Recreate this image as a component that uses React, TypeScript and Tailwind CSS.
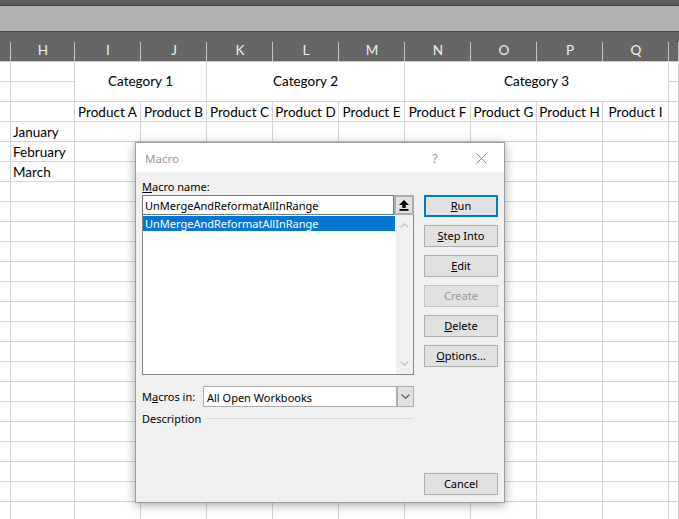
import React from 'react';

const GRID = 'grid grid-cols-[11px_64px_repeat(9,66px)_1fr]';
const cell = 'border-r border-b border-[#d4d4d4] bg-white';
const letters = ['', 'H', 'I', 'J', 'K', 'L', 'M', 'N', 'O', 'P', 'Q', ''];
const products = ['A', 'B', 'C', 'D', 'E', 'F', 'G', 'H', 'I'];
const months = ['January', 'February', 'March'];

function Sheet() {
  const rows: React.ReactNode[] = [];
  rows.push(<div key="r1a" className={cell} />);
  rows.push(<div key="r1b" className={cell} />);
  rows.push(
    <div key="c1" className={`${cell} col-span-2 row-span-2 flex items-center justify-center`}>Category 1</div>
  );
  rows.push(
    <div key="c2" className={`${cell} col-span-3 row-span-2 flex items-center justify-center`}>Category 2</div>
  );
  rows.push(
    <div key="c3" className={`${cell} col-span-4 row-span-2 flex items-center justify-center`}>Category 3</div>
  );
  rows.push(<div key="r1z" className={cell} />);
  rows.push(<div key="r2a" className={cell} />);
  rows.push(<div key="r2b" className={cell} />);
  rows.push(<div key="r2z" className={cell} />);
  rows.push(<div key="r3a" className={cell} />);
  rows.push(<div key="r3b" className={cell} />);
  products.forEach((p) =>
    rows.push(
      <div key={'p' + p} className={`${cell} flex items-center justify-center pt-[2px] whitespace-nowrap overflow-hidden`}>
        Product {p}
      </div>
    )
  );
  rows.push(<div key="r3z" className={cell} />);
  months.forEach((m) => {
    rows.push(<div key={m + 'a'} className={cell} />);
    rows.push(
      <div key={m} className={`${cell} flex items-center pl-[2px] pt-[2px] whitespace-nowrap`}>
        {m}
      </div>
    );
    for (let i = 0; i < 10; i++) rows.push(<div key={m + i} className={cell} />);
  });
  for (let r = 0; r < 18; r++) {
    for (let i = 0; i < 12; i++) rows.push(<div key={'e' + r + '-' + i} className={cell} />);
  }
  return (
    <div className="flex flex-col">
      <div className="h-[5px] bg-[#5c5c5c]" />
      <div className="h-px bg-[#3f3f3f]" />
      <div className="h-[25px] bg-[#b1b1b1]" />
      <div className="h-px bg-[#474747]" />
      <div className={`${GRID} h-[30px] bg-[#666666] border-b border-[#cfcfcf]`}>
        {letters.map((l, i) => (
          <div
            key={i}
            className="relative flex items-end justify-center pb-[2px] text-[13.5px] leading-[18px] text-[#efefef] after:absolute after:right-0 after:bottom-0 after:h-[19px] after:w-px after:bg-[#c4c4c4]"
          >
            {l}
          </div>
        ))}
      </div>
      <div className={`${GRID} auto-rows-[20px] text-[13.5px] text-black`}>{rows}</div>
    </div>
  );
}

function Btn({
  children,
  primary,
  disabled,
}: {
  children: React.ReactNode;
  primary?: boolean;
  disabled?: boolean;
}) {
  return (
    <div
      className={`h-[22px] w-[74px] flex items-center justify-center pt-px bg-[#e1e1e1] ${
        primary
          ? 'border-2 border-[#0078d7]'
          : disabled
          ? 'border border-[#c4c4c4] text-[#9a9a9a]'
          : 'border border-[#adadad]'
      }`}
    >
      {children}
    </div>
  );
}

function UpArrow() {
  return (
    <svg width="10" height="11" viewBox="0 0 10 11">
      <polygon points="5,0 10,5 6.7,5 6.7,8 3.3,8 3.3,5 0,5" fill="#000" />
      <rect x="0.5" y="9" width="9" height="1.8" fill="#000" />
    </svg>
  );
}

function Chevron({ up, color }: { up?: boolean; color: string }) {
  return (
    <svg width="9" height="5" viewBox="0 0 9 5">
      <polyline
        points={up ? '0.5,4.5 4.5,0.8 8.5,4.5' : '0.5,0.5 4.5,4.2 8.5,0.5'}
        fill="none"
        stroke={color}
        strokeWidth="1.2"
      />
    </svg>
  );
}

function Dialog() {
  return (
    <div className="absolute left-[135px] top-[142px] w-[370px] h-[361px] border border-[#9c9c9c] bg-[#f0f0f0] shadow-[0_2px_10px_rgba(0,0,0,0.35)] flex flex-col text-[11px] text-black font-['Noto_Sans',sans-serif]">
      <div className="h-[29px] bg-white flex items-center pl-[9px] pt-[2px] text-[#999999] text-[11.5px] shrink-0">
        <span className="flex-1">Macro</span>
        <span className="w-[46px] text-center text-[13px]">?</span>
        <div className="w-[46px] flex items-center justify-center">
          <svg width="11" height="11" viewBox="0 0 11 11">
            <path d="M0.5 0.5 L10.5 10.5 M10.5 0.5 L0.5 10.5" stroke="#8a8a8a" strokeWidth="1" />
          </svg>
        </div>
      </div>
      <div className="flex-1 flex pl-[6px] pr-[6px]">
        <div className="w-[272px] flex flex-col">
          <div className="mt-[7px] h-[16px] leading-[16px]">
            <span className="underline">M</span>acro name:
          </div>
          <div className="h-[20px] flex">
            <div className="flex-1 h-[20px] border border-[#7a7a7a] bg-white pl-[2px] pt-px leading-[18px]">
              UnMergeAndReformatAllInRange
            </div>
            <div className="w-[20px] h-[20px] border-2 border-[#adadad] bg-[#e1e1e1] flex items-center justify-center">
              <UpArrow />
            </div>
          </div>
          <div className="h-[160px] border border-[#828790] border-t-0 bg-white flex">
            <div className="flex-1 pt-px">
              <div className="h-[15px] bg-[#0078d7] text-white pl-[2px] leading-[16px]">
                UnMergeAndReformatAllInRange
              </div>
            </div>
            <div className="w-[17px] ml-px bg-[#f0f0f0] flex flex-col items-center justify-between py-[8px]">
              <Chevron up color="#c2c2c2" />
              <Chevron color="#c2c2c2" />
            </div>
          </div>
          <div className="mt-[11px] h-[21px] flex items-center">
            <div className="w-[61px] pt-px">
              M<span className="underline">a</span>cros in:
            </div>
            <div className="flex-1 h-[21px] border border-[#adadad] bg-white flex">
              <div className="flex-1 pl-[3px] pt-px leading-[19px]">All Open Workbooks</div>
              <div className="w-[17px] bg-[#e1e1e1] border-l-2 border-[#adadad] flex items-center justify-center">
                <Chevron color="#5a5a5a" />
              </div>
            </div>
          </div>
          <div className="mt-[3px] h-[16px] flex items-center">
            <span className="pt-[2px]">Description</span>
            <div className="flex-1 h-px bg-[#d9d9d9] ml-[5px]" />
          </div>
        </div>
        <div className="ml-[10px] flex flex-col gap-[8px] pt-[23px] pb-[7px]">
          <Btn primary>
            <span className="underline">R</span>un
          </Btn>
          <Btn>
            <span className="underline">S</span>tep Into
          </Btn>
          <Btn>
            <span className="underline">E</span>dit
          </Btn>
          <Btn disabled>Create</Btn>
          <Btn>
            <span className="underline">D</span>elete
          </Btn>
          <Btn>
            <span className="underline">O</span>ptions...
          </Btn>
          <div className="mt-auto">
            <Btn>Cancel</Btn>
          </div>
        </div>
      </div>
    </div>
  );
}

export default function App() {
  return (
    <div className="relative w-[679px] h-[519px] overflow-hidden bg-white font-['Lato',sans-serif]">
      <Sheet />
      <Dialog />
    </div>
  );
}
